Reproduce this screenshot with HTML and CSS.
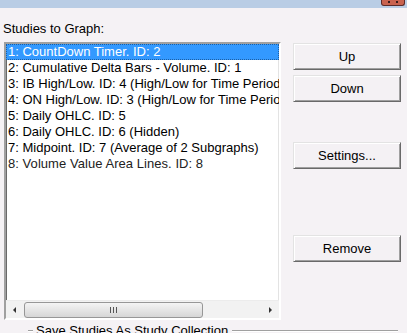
FILE: index.html
```html
<!DOCTYPE html>
<html lang="en">
<head>
    <meta charset="UTF-8">
    <title>Studies to Graph</title>
    <link rel="stylesheet" href="styles.css">
</head>
<body>

    <div class="titlebar">
        <span class="close"><span class="close-x"></span></span>
    </div>

    <div class="label">Studies to Graph:</div>

    <div class="main">
        <div class="listbox">
            <ul class="items">
                <li class="selected">1: CountDown Timer. ID: 2</li>
                <li>2: Cumulative Delta Bars - Volume. ID: 1</li>
                <li>3: IB High/Low. ID: 4 (High/Low for Time Period)</li>
                <li>4: ON High/Low. ID: 3 (High/Low for Time Period)</li>
                <li>5: Daily OHLC. ID: 5</li>
                <li>6: Daily OHLC. ID: 6 (Hidden)</li>
                <li>7: Midpoint. ID: 7 (Average of 2 Subgraphs)</li>
                <li class="thin">8: Volume Value Area Lines. ID: 8</li>
            </ul>
            <div class="hscroll">
                <span class="arrow"><span class="tri-left"></span></span>
                <div class="track">
                    <div class="thumb"><span class="grip"></span></div>
                </div>
                <span class="arrow"><span class="tri-right"></span></span>
            </div>
        </div>

        <div class="buttons">
            <button class="btn">Up</button>
            <button class="btn">Down</button>
            <button class="btn settings">Settings...</button>
            <button class="btn remove">Remove</button>
        </div>
    </div>

    <div class="group">
        <span class="etch short"></span>
        <span class="legend">Save Studies As Study Collection</span>
        <span class="etch long"></span>
    </div>

</body>
</html>
```

FILE: styles.css
```css
body {
    margin: 0;
    background-color: #f5f2f5;
    font-family: "Liberation Sans", Arial, sans-serif;
    font-size: 13px;
    line-height: 16px;
    color: #000;
    width: 407px;
    height: 333px;
    overflow: hidden;
}

.titlebar {
    height: 8px;
    background: #b9cde5;
    display: flex;
    justify-content: flex-end;
    align-items: flex-start;
}

.close {
    width: 22px;
    height: 5px;
    margin-right: 2px;
    background: #c9634f;
    border: 1px solid #5c2c2a;
    border-top: none;
    border-radius: 0 0 3px 3px;
    display: flex;
    justify-content: center;
}

.close-x {
    width: 6px;
    height: 2px;
    margin-top: 1px;
    border-left: 2px solid #3a1c1c;
    border-right: 2px solid #3a1c1c;
}

.label {
    margin-top: 13px;
    padding-left: 3px;
}

.main {
    display: flex;
    margin-top: 5px;
}

.listbox {
    margin-left: 4px;
    width: 273px;
    height: 274px;
    background: #fff;
    border: 2px solid;
    border-color: #a0a0a0 #ffffff #ffffff #a0a0a0;
    box-shadow: inset 1px 1px 0 #696969, inset -1px -1px 0 #e3e3e3;
    display: flex;
    flex-direction: column;
    overflow: hidden;
}

.items {
    list-style: none;
    margin: 0;
    padding: 0;
    flex: 1;
}

.items li {
    height: 16px;
    padding-left: 2px;
    white-space: nowrap;
    overflow: hidden;
}

.items li.selected {
    background: #3399ff;
    color: #fff;
    outline: 1px dotted #1d5fa3;
    outline-offset: -1px;
}

.items li.thin {
    color: #222;
    letter-spacing: 0.05px;
}

.hscroll {
    height: 17px;
    display: flex;
    background: #f2f2f2;
    border-top: 1px solid #ececec;
}

.arrow {
    width: 17px;
    display: flex;
    align-items: center;
    justify-content: center;
}

.tri-left {
    border-top: 3px solid transparent;
    border-bottom: 3px solid transparent;
    border-right: 3px solid #333;
}

.tri-right {
    border-top: 3px solid transparent;
    border-bottom: 3px solid transparent;
    border-left: 3px solid #333;
}

.track {
    flex: 1;
    display: flex;
    align-items: center;
}

.thumb {
    margin-left: 1px;
    width: 177px;
    height: 14px;
    border: 1px solid #979797;
    border-radius: 3px;
    background: linear-gradient(#f4f4f4, #e2e2e2 60%, #d6d6d6);
    display: flex;
    align-items: center;
    justify-content: center;
}

.grip {
    width: 7px;
    height: 6px;
    background: repeating-linear-gradient(90deg, #555 0 1px, transparent 1px 3px);
}

.buttons {
    margin-left: 12px;
    margin-top: 1px;
    display: flex;
    flex-direction: column;
}

.btn {
    width: 108px;
    height: 27px;
    margin: 0 0 5px 0;
    padding: 0;
    font-family: "Liberation Sans", Arial, sans-serif;
    font-size: 13px;
    color: #000;
    background: #f4f1f4;
    border: 1px solid;
    border-color: #e3e3e3 #696969 #696969 #e3e3e3;
    box-shadow: inset 1px 1px 0 #fff, inset -1px -1px 0 #a0a0a0;
}

.settings {
    margin-top: 35px;
}

.remove {
    margin-top: 61px;
}

.group {
    display: flex;
    align-items: center;
    margin-top: 3px;
    margin-left: 28px;
    width: 370px;
    height: 16px;
}

.etch {
    height: 1px;
    border-top: 1px solid #a0a0a0;
    background: #fff;
}

.short {
    width: 5px;
    margin-right: 3px;
}

.long {
    flex: 1;
    margin-left: 4px;
}
```
